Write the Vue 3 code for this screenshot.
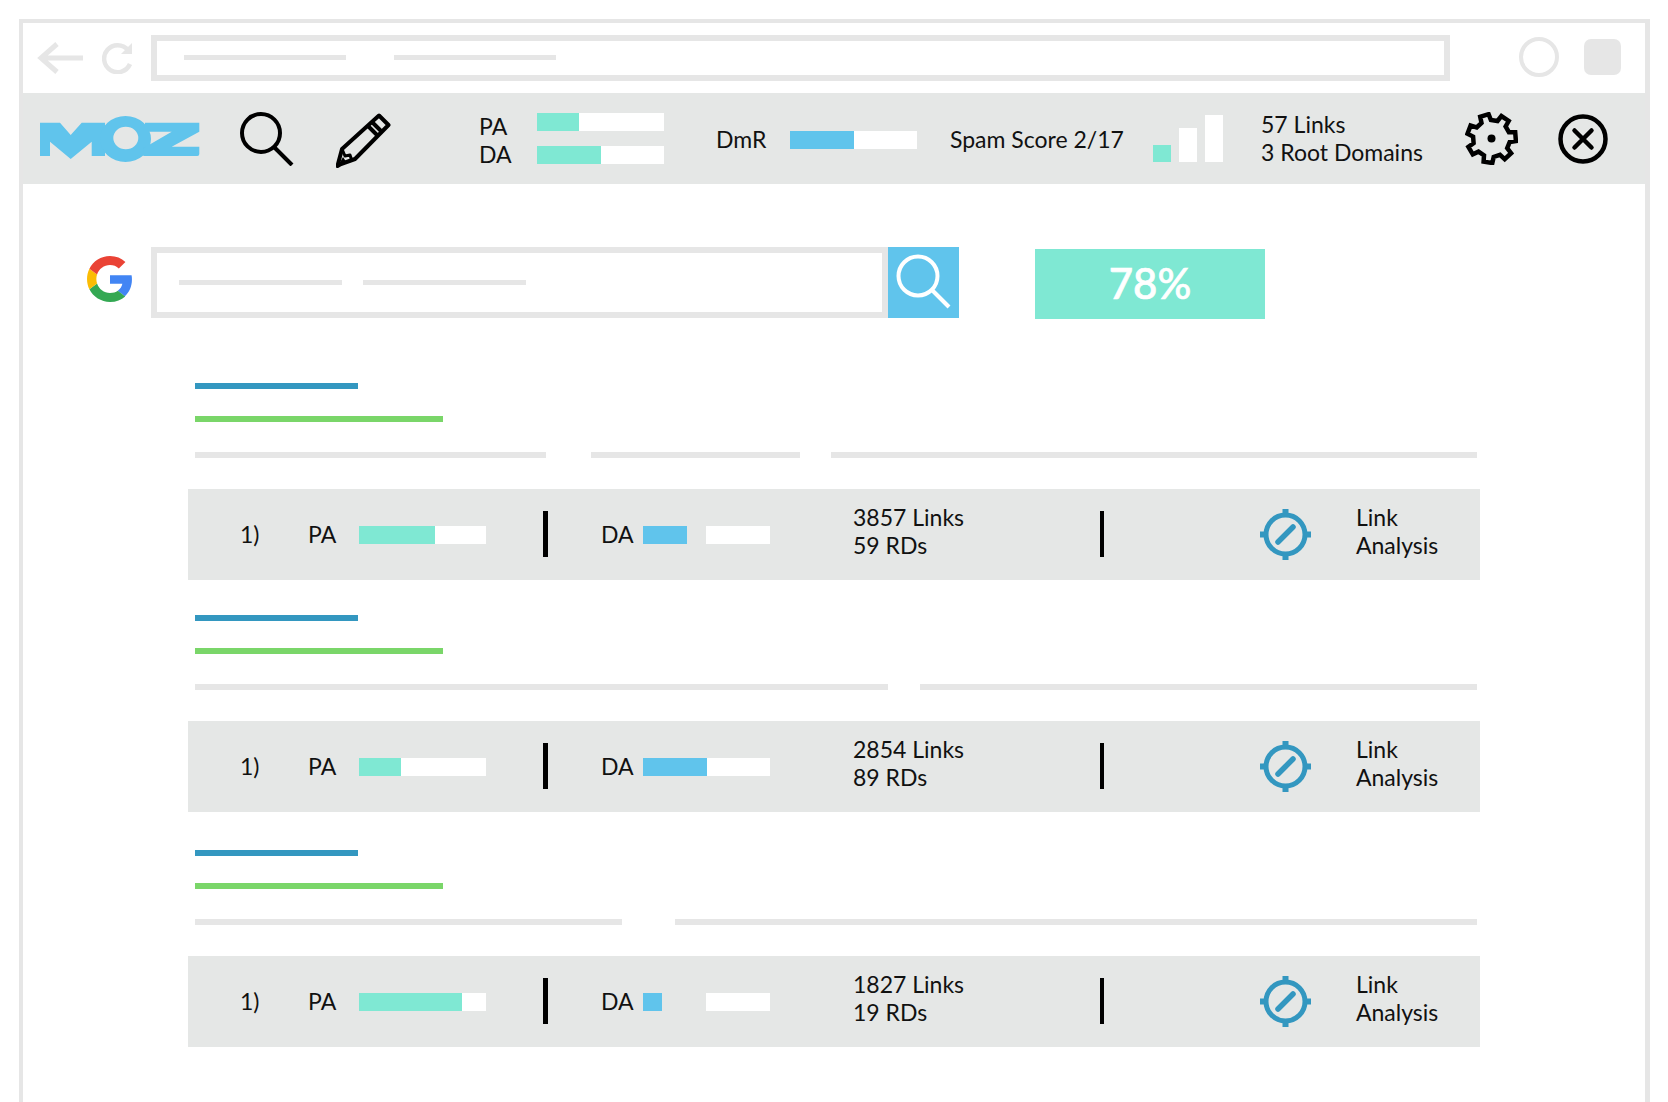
<script setup>
const toothCount = 7
const gearPath = (() => {
  const pts = []
  const cx = 26.5, cy = 26.5, rOut = 24.5, rIn = 18.5
  const step = (2 * Math.PI) / toothCount
  for (let i = 0; i < toothCount; i++) {
    const a = i * step - Math.PI / 2 - 0.3
    const pairs = [
      [rIn, a - step * 0.3],
      [rOut, a - step * 0.2],
      [rOut, a + step * 0.2],
      [rIn, a + step * 0.3]
    ]
    for (const [r, t] of pairs) {
      pts.push(`${(cx + r * Math.cos(t)).toFixed(1)} ${(cy + r * Math.sin(t)).toFixed(1)}`)
    }
  }
  return 'M' + pts.join('L') + 'Z'
})()

const results = [
  {
    cls: 'first',
    lines: [{ w: 351, gap: 45 }, { w: 209, gap: 31 }, { w: 646, gap: 0 }],
    pa: 76, da: 44, daWhite: 64, links: '3857 Links', rds: '59 RDs'
  },
  {
    cls: 'second',
    lines: [{ w: 693, gap: 32 }, { w: 557, gap: 0 }],
    pa: 42, da: 64, daWhite: 63, links: '2854 Links', rds: '89 RDs'
  },
  {
    cls: 'third',
    lines: [{ w: 427, gap: 53 }, { w: 802, gap: 0 }],
    pa: 103, da: 19, daWhite: 64, links: '1827 Links', rds: '19 RDs'
  }
]
</script>

<template>
  <div class="frame">
    <header class="chrome">
      <svg class="back" width="46" height="32" viewBox="0 0 46 32" fill="none" stroke="#e6e6e6" stroke-width="5">
        <path d="M46 16H5M20 2L4 16l16 14" />
      </svg>
      <svg class="reload" width="32" height="32" viewBox="0 0 32 32" fill="none" stroke="#e6e6e6" stroke-width="4.5">
        <path d="M26 8A13.5 13.5 0 1 0 28 22" />
        <path d="M30 1v11H19z" fill="#e6e6e6" stroke="none" />
      </svg>
      <div class="address">
        <span class="stub"></span>
        <span class="stub second-stub"></span>
      </div>
      <span class="round"></span>
      <span class="square"></span>
    </header>

    <nav class="toolbar">
      <svg class="moz" width="161" height="46" viewBox="0 0 161 46">
        <path fill="#60c4ec" d="M1 6.700h20L31.700 19 42.700 6.700H66V40H52.700V25.700L31.700 43 11 25.700V40H1z" />
        <path fill="#60c4ec" fill-rule="evenodd" d="M61 23a25.500 23 0 1 0 51 0a25.500 23 0 1 0-51 0zM74.300 22a12.500 11.300 0 1 1 25 0a12.500 11.300 0 1 1-25 0z" />
        <path fill="#60c4ec" d="M106 6.700h54.300v9L132.700 30.700h27.600V38a2 2 0 0 1-2 2h-54V32.300L132.700 15.700H106z" />
      </svg>
      <svg class="lens" width="54" height="54" viewBox="0 0 54 54" fill="none" stroke="#000" stroke-width="4">
        <ellipse cx="21" cy="21" rx="19" ry="19" />
        <path d="M34 35l18 18" />
      </svg>
      <svg class="pencil" width="55" height="55" viewBox="0 0 55 55" fill="none" stroke="#000" stroke-width="4" stroke-linejoin="round">
        <path d="M43 2.500l9.500 9.500L19 46 5 51l-3.500 2L6 36z" />
        <path d="M36 9l9.500 9.500M32 13l9.500 9.500" />
        <path d="M6 36l3 7 5-1 2 6" stroke-width="3" />
        <path d="M2 53l5-9 4 6z" fill="#000" stroke="none" />
      </svg>
      <div class="pair">
        <div class="txt pair-labels">
          <div>PA</div>
          <div>DA</div>
        </div>
        <div class="pair-bars">
          <span class="bar"><i class="fill mint" style="width: 42px"></i></span>
          <span class="bar"><i class="fill mint" style="width: 64px"></i></span>
        </div>
      </div>
      <span class="txt dmr">DmR</span>
      <span class="bar dmr-bar"><i class="fill sky" style="width: 64px"></i></span>
      <span class="txt spam">Spam Score 2/17</span>
      <div class="signal">
        <i class="sig s1"></i><i class="sig s2"></i><i class="sig s3"></i>
      </div>
      <div class="txt two-line tool-links">
        <div>57 Links</div>
        <div>3 Root Domains</div>
      </div>
      <svg class="gear" width="53" height="53" viewBox="0 0 53 53" fill="none" stroke="#000" stroke-width="4.500" stroke-linejoin="miter">
        <path :d="gearPath" />
        <circle cx="26.500" cy="26.500" r="4" fill="#000" stroke="none" />
      </svg>
      <svg class="close" width="50" height="50" viewBox="0 0 50 50" fill="none" stroke="#000" stroke-width="4.500">
        <circle cx="25" cy="25" r="22.500" />
        <path d="M16.500 16.500l17 17M33.500 16.500l-17 17" stroke-linecap="round" />
      </svg>
    </nav>

    <main class="content">
      <section class="search-row">
        <svg class="google" width="46" height="46" viewBox="0 0 48 48">
          <path fill="#4285f4" d="M46.900 24.500c0-1.600-.1-3.100-.4-4.500H24v9h12.900c-.6 3-2.200 5.500-4.800 7.200l7.400 5.800c4.400-4 7.400-10 7.400-17.500z" />
          <path fill="#34a853" d="M24 48c6.500 0 11.900-2.100 15.900-5.800l-7.700-6c-2.100 1.500-4.900 2.300-8.200 2.300-6.300 0-11.600-4.200-13.500-9.900l-8 6.200C6.500 42.600 14.600 48 24 48z" />
          <path fill="#fbbc05" d="M10.500 28.600c-1-3-1-6.200 0-9.200l-8-6.200C-.8 19.900-.8 28.100 2.500 34.800z" />
          <path fill="#ea4335" d="M24 9.500c3.500 0 6.700 1.200 9.200 3.600l6.900-6.900C35.900 2.400 30.500 0 24 0 14.600 0 6.500 5.400 2.500 13.200l8 6.200C12.400 13.700 17.700 9.500 24 9.500z" />
        </svg>
        <div class="search-box">
          <span class="search-stub"></span>
          <span class="search-stub"></span>
        </div>
        <button class="search-btn">
          <svg width="71" height="71" viewBox="0 0 71 71" fill="none" stroke="#fff" stroke-width="4">
            <circle cx="30" cy="29" r="19.500" />
            <path d="M44 43l17 17" />
          </svg>
        </button>
        <div class="percent">78%</div>
      </section>

      <section v-for="r in results" :key="r.cls" class="result" :class="r.cls">
        <div class="title-line"></div>
        <div class="url-line"></div>
        <div class="desc">
          <span
            v-for="(l, i) in r.lines"
            :key="i"
            class="desc-line"
            :style="{ width: l.w + 'px', marginRight: l.gap + 'px' }"
          ></span>
        </div>
        <div class="row">
          <span class="txt rank">1)</span>
          <span class="txt pa">PA</span>
          <span class="bar row-bar"><i class="fill mint" :style="{ width: r.pa + 'px' }"></i></span>
          <i class="sep sep-a"></i>
          <span class="txt da">DA</span>
          <span class="da-bar">
            <i class="fill sky" :style="{ width: r.da + 'px' }"></i>
            <i class="da-white" :style="{ width: r.daWhite + 'px' }"></i>
          </span>
          <div class="txt two-line row-links">
            <div>{{ r.links }}</div>
            <div>{{ r.rds }}</div>
          </div>
          <i class="sep sep-b"></i>
          <svg class="target" width="51" height="51" viewBox="0 0 51 51" fill="none" stroke="#3397c0">
            <circle cx="25.500" cy="25.500" r="19.500" stroke-width="5" />
            <path d="M25.500 0v8M25.500 43v8M0 25.500h8M43 25.500h8" stroke-width="6" />
            <path d="M18 33l15-15" stroke-width="5.500" stroke-linecap="round" />
          </svg>
          <div class="txt two-line row-action">
            <div>Link</div>
            <div>Analysis</div>
          </div>
        </div>
      </section>
    </main>
  </div>
</template>

<style>
html, body { margin: 0; background: #fff; overflow: hidden; }
</style>

<style scoped>
.frame {
  box-sizing: border-box;
  width: 1631px;
  height: 1083px;
  margin: 19px 0 0 19px;
  border: solid #e6e6e6;
  border-width: 4px 5px 0 4px;
  font-family: Lato, "Open Sans", sans-serif;
  color: #111;
}
.chrome {
  height: 70px;
  display: flex;
  align-items: flex-start;
}
.back { margin: 19px 0 0 14px; }
.reload { margin: 19px 0 0 19px; }
.address {
  box-sizing: border-box;
  width: 1299px;
  height: 46px;
  margin: 12px 0 0 17px;
  border: 6px solid #e6e6e6;
  display: flex;
  align-items: center;
  padding: 0 0 2px 27px;
}
.stub { width: 162px; height: 5px; background: #e6e6e6; }
.second-stub { margin-left: 48px; }
.round {
  box-sizing: border-box;
  width: 40px;
  height: 40px;
  margin: 14px 0 0 69px;
  border: 4px solid #e6e6e6;
  border-radius: 50%;
}
.square {
  width: 37px;
  height: 36px;
  margin: 16px 0 0 25px;
  background: #e6e6e6;
  border-radius: 7px;
}
.toolbar {
  height: 91px;
  background: #e5e7e6;
  display: flex;
  align-items: center;
}
.txt { font-size: 23px; line-height: 28px; white-space: nowrap; }
.moz { margin-left: 16px; flex: none; }
.lens { margin-left: 40px; flex: none; }
.pencil { margin-left: 42px; flex: none; margin-top: 3px; }
.pair { margin-left: 88px; display: flex; align-items: center; }
.pair-labels { width: 58px; margin-top: 3px; }
.pair-bars { display: flex; flex-direction: column; gap: 15px; }
.bar { display: block; background: #fff; height: 18px; flex: none; overflow: hidden; }
.pair-bars .bar { width: 127px; }
.fill { display: block; height: 18px; flex: none; }
.mint { background: #7fe8d3; }
.sky { background: #60c4ec; }
.dmr { margin-left: 52px; width: 74px; }
.dmr-bar { width: 127px; margin-top: 2px; }
.spam { margin-left: 33px; width: 203px; }
.signal { display: flex; align-items: flex-end; gap: 8px; height: 47px; }
.sig { display: block; width: 18px; }
.s1 { height: 17px; background: #7fe8d3; }
.s2 { height: 34px; background: #fff; }
.s3 { height: 47px; background: #fff; }
.tool-links { margin: 0 0 2px 38px; width: 204px; }
.gear { flex: none; }
.close { flex: none; margin-left: 40px; }
.content { padding: 63px 0 0 165px; }
.search-row {
  display: flex;
  align-items: flex-start;
  margin-left: -101px;
  height: 71px;
}
.google { flex: none; margin-top: 9px; }
.search-box {
  box-sizing: border-box;
  width: 737px;
  height: 71px;
  margin-left: 18px;
  border: 6px solid #e6e6e6;
  display: flex;
  align-items: center;
  gap: 21px;
  padding-left: 22px;
}
.search-stub { width: 163px; height: 5px; background: #e6e6e6; }
.search-btn {
  width: 71px;
  height: 71px;
  padding: 0;
  border: 0;
  background: #60c4ec;
  display: block;
}
.search-btn svg { display: block; }
.percent {
  width: 230px;
  height: 70px;
  margin: 2px 0 0 76px;
  background: #7fe8d3;
  color: #fff;
  font-size: 42px;
  font-weight: 500;
  -webkit-text-stroke: 0.7px #fff;
  line-height: 68px;
  text-align: center;
}
.result { width: 1292px; }
.first { margin-top: 65px; }
.second { margin-top: 35px; }
.third { margin-top: 38px; }
.title-line { height: 6px; width: 163px; margin-left: 7px; background: #3397c0; }
.url-line { height: 6px; width: 248px; margin: 27px 0 0 7px; background: #7ad669; }
.desc { display: flex; height: 6px; margin: 30px 0 0 7px; }
.desc-line { display: block; height: 6px; background: #e6e6e6; flex: none; }
.row {
  height: 91px;
  margin-top: 31px;
  background: #e5e7e6;
  display: flex;
  align-items: center;
  padding-left: 52px;
}
.rank { width: 68px; margin-bottom: 2px; }
.pa { width: 51px; margin-bottom: 2px; }
.row-bar { width: 127px; }
.sep { display: block; height: 46px; background: #000; flex: none; margin-bottom: 2px; }
.sep-a { width: 5px; margin-left: 57px; }
.da { width: 42px; margin: 0 0 2px 53px; }
.da-bar { display: flex; justify-content: space-between; width: 127px; height: 18px; flex: none; }
.da-white { display: block; height: 18px; background: #fff; }
.row-links { width: 247px; margin: 0 0 8px 83px; }
.sep-b { width: 4px; }
.target { flex: none; margin-left: 156px; }
.row-action { margin: 0 0 8px 45px; }
</style>
